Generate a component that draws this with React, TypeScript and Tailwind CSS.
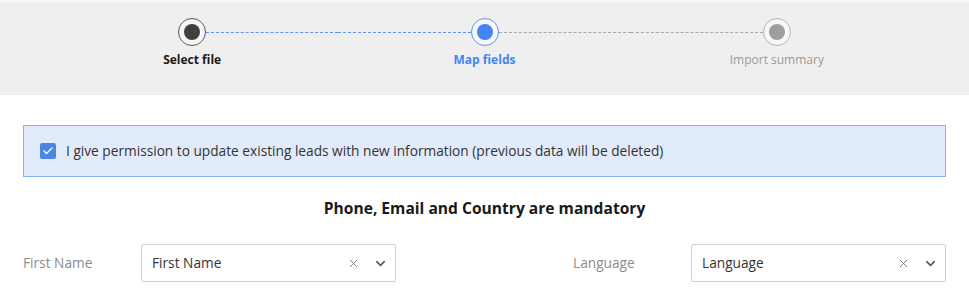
import { ChevronDown, X, Check } from "lucide-react";

type Step = { label: string; state: "done" | "active" | "todo" };

const steps: Step[] = [
  { label: "Select file", state: "done" },
  { label: "Map fields", state: "active" },
  { label: "Import summary", state: "todo" },
];

function StepItem({ step, index }: { step: Step; index: number }) {
  const ring =
    step.state === "done"
      ? "border-[#5a5a5a]"
      : step.state === "active"
        ? "border-[#5b95f5]"
        : "border-[#b4b4b4]";
  const dot =
    step.state === "done"
      ? "bg-[#404040]"
      : step.state === "active"
        ? "bg-[#4285f4]"
        : "bg-[#9e9e9e]";
  const text =
    step.state === "done"
      ? "font-bold text-[#1a1a1a]"
      : step.state === "active"
        ? "font-bold text-[#4285f4]"
        : "text-[#9a9a9a]";
  // line colour on each side of the circle
  const leftLine =
    index === 0 ? "border-transparent" : index === 1 ? "border-[#5b95f5]" : "border-[#a8a8a8]";
  const rightLine =
    index === 2 ? "border-transparent" : index === 0 ? "border-[#5b95f5]" : "border-[#a8a8a8]";

  return (
    <div className="flex flex-1 flex-col items-center">
      <div className="flex w-full items-center">
        <div className={`flex-1 border-t border-dashed ${leftLine}`} />
        <div className={`flex h-7 w-7 items-center justify-center rounded-full border-[1.5px] bg-[#f7f7f7] ${ring}`}>
          <div className={`h-4 w-4 rounded-full ${dot}`} />
        </div>
        <div className={`flex-1 border-t border-dashed ${rightLine}`} />
      </div>
      <div className={`mt-[6px] text-[12px] leading-4 ${text}`}>{step.label}</div>
    </div>
  );
}

function SelectField({ label, value }: { label: string; value: string }) {
  return (
    <div className="flex w-[373px] items-center">
      <div className="w-[118px] text-[13.7px] text-[#8c8c8c]">{label}</div>
      <div className="flex h-[38px] flex-1 items-center rounded-[2px] border border-[#d0d0d0] bg-white pl-[10px] pr-[7px]">
        <span className="flex-1 text-[13.7px] text-[#333]">{value}</span>
        <X className="mr-[13px] h-[13px] w-[13px] text-[#707070]" strokeWidth={1.6} />
        <ChevronDown className="h-[15px] w-[15px] text-[#555]" strokeWidth={2.4} />
      </div>
    </div>
  );
}

export default function App() {
  return (
    <main className="min-h-screen bg-white font-['Open_Sans',sans-serif]">
      {/* Stepper */}
      <div className="h-[95px] border-t-2 border-[#f7f7f7] bg-[#efefef] px-[46px] pt-[16px]">
        <div className="flex">
          {steps.map((s, i) => (
            <StepItem key={s.label} step={s} index={i} />
          ))}
        </div>
      </div>

      <div className="px-[23px]">
        {/* Permission banner */}
        <label className="mt-[30px] flex h-[52px] items-center border border-[#86affa] bg-[#e2ebfb] pl-[16px]">
          <span className="flex h-4 w-4 items-center justify-center rounded-[2px] bg-[#4a86e8]">
            <Check className="h-3 w-3 text-white" strokeWidth={2.5} />
          </span>
          <span className="ml-[10px] text-[13.7px] text-[#333]">
            I give permission to update existing leads with new information (previous data will be deleted)
          </span>
        </label>

        <h2 className="mt-[21px] text-center text-[15.6px] font-bold leading-5 text-[#1a1a1a]">
          Phone, Email and Country are mandatory
        </h2>

        <div className="mt-[26px] flex justify-between">
          <SelectField label="First Name" value="First Name" />
          <SelectField label="Language" value="Language" />
        </div>
      </div>
    </main>
  );
}
